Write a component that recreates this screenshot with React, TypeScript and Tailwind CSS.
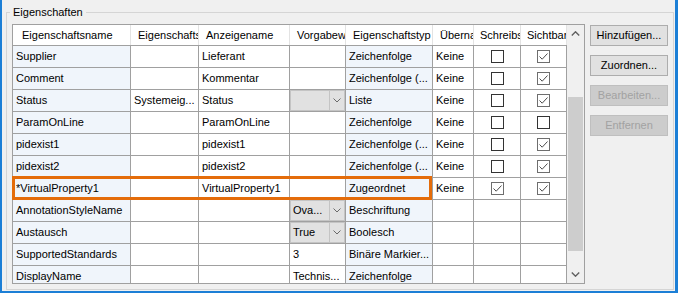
import React from 'react';

type Def = { kind: 'text' | 'combo'; value: string };

interface PropRow {
  name: string;
  source: string;
  display: string;
  def: Def;
  type: string;
  transfer: string;
  writable?: boolean;
  visible?: boolean;
}

const COLS = 'grid grid-cols-[118px_68px_91px_56px_87px_41px_47px_46px]';

// header captions are cut off by the narrow columns, as in the dialog
const HEADERS = [
  'Eigenschaftsname',
  'Eigenschafts',
  'Anzeigename',
  'Vorgabew',
  'Eigenschaftstyp',
  'Überna',
  'Schreibs',
  'Sichtbar',
];

const ROWS: PropRow[] = [
  { name: 'Supplier', source: '', display: 'Lieferant', def: { kind: 'text', value: '' }, type: 'Zeichenfolge', transfer: 'Keine', writable: false, visible: true },
  { name: 'Comment', source: '', display: 'Kommentar', def: { kind: 'text', value: '' }, type: 'Zeichenfolge (...', transfer: 'Keine', writable: false, visible: true },
  { name: 'Status', source: 'Systemeig...', display: 'Status', def: { kind: 'combo', value: '' }, type: 'Liste', transfer: 'Keine', writable: false, visible: true },
  { name: 'ParamOnLine', source: '', display: 'ParamOnLine', def: { kind: 'text', value: '' }, type: 'Zeichenfolge', transfer: 'Keine', writable: false, visible: false },
  { name: 'pidexist1', source: '', display: 'pidexist1', def: { kind: 'text', value: '' }, type: 'Zeichenfolge (...', transfer: 'Keine', writable: false, visible: true },
  { name: 'pidexist2', source: '', display: 'pidexist2', def: { kind: 'text', value: '' }, type: 'Zeichenfolge (...', transfer: 'Keine', writable: false, visible: true },
  { name: '*VirtualProperty1', source: '', display: 'VirtualProperty1', def: { kind: 'text', value: '' }, type: 'Zugeordnet', transfer: 'Keine', writable: true, visible: true },
  { name: 'AnnotationStyleName', source: '', display: '', def: { kind: 'combo', value: 'Ova...' }, type: 'Beschriftung', transfer: '' },
  { name: 'Austausch', source: '', display: '', def: { kind: 'combo', value: 'True' }, type: 'Boolesch', transfer: '' },
  { name: 'SupportedStandards', source: '', display: '', def: { kind: 'text', value: '3' }, type: 'Binäre Markier...', transfer: '' },
  { name: 'DisplayName', source: '', display: '', def: { kind: 'text', value: 'Technis...' }, type: 'Zeichenfolge', transfer: '' },
];

const Chevron = ({ up = false }: { up?: boolean }) => (
  <svg width="9" height="5" viewBox="0 0 9 5">
    <path
      d={up ? 'M0.8 4.5 L4.5 0.8 L8.2 4.5' : 'M0.8 0.5 L4.5 4.2 L8.2 0.5'}
      stroke="#606060"
      strokeWidth="1.4"
      fill="none"
    />
  </svg>
);

const SmallChevron = () => (
  <svg width="8" height="5" viewBox="0 0 8 5">
    <path d="M0.5 0.5 L4 4 L7.5 0.5" stroke="#6a6a6a" strokeWidth="1" fill="none" />
  </svg>
);

const CheckBox = ({ checked }: { checked: boolean }) => (
  <div
    className={`w-[13px] h-[13px] border bg-white flex items-center justify-center ${checked ? 'border-[#6e6e6e]' : 'border-[#333333]'}`}
  >
    {checked && (
      <svg width="11" height="11" viewBox="0 0 11 11">
        <path d="M1.5 5.5 L4.2 8.2 L9.5 2.5" stroke="#4d4d4d" strokeWidth="1" fill="none" />
      </svg>
    )}
  </div>
);

const Combo = ({ value }: { value: string }) => (
  <div className="h-full w-full flex bg-[#e1e1e1] border border-[#c4c4c4]">
    <span className="flex-1 pl-[2px] flex items-center whitespace-nowrap overflow-hidden">{value}</span>
    <div className="w-[15px] border-l border-[#c4c4c4] flex items-center justify-center">
      <SmallChevron />
    </div>
  </div>
);

const Cell = ({ children, tint = false }: { children?: React.ReactNode; tint?: boolean }) => (
  <div
    className={`border-r border-[#a0a0a0] pl-[3px] flex items-center whitespace-nowrap overflow-hidden ${tint ? 'bg-[#f0f5fb]' : 'bg-white'}`}
  >
    {children}
  </div>
);

const Scrollbar = () => (
  <div className="w-[17px] h-[258px] bg-[#f0f0f0] flex flex-col flex-shrink-0">
    <div className="h-[17px] flex items-center justify-center">
      <Chevron up />
    </div>
    <div className="h-[55px]" />
    <div className="h-[154px] mx-[1px] bg-[#cdcdcd]" />
    <div className="flex-1" />
    <div className="h-[17px] flex items-center justify-center">
      <Chevron />
    </div>
  </div>
);

const Button = ({ label, disabled = false }: { label: string; disabled?: boolean }) => (
  <button
    disabled={disabled}
    className={`w-[78px] h-[21px] border flex items-center justify-center ${disabled ? 'bg-[#cccccc] border-[#bfbfbf] text-[#a2a2a2]' : 'bg-[#e1e1e1] border-[#adadad] text-black'}`}
  >
    {label}
  </button>
);

export default function App() {
  return (
    <div className="w-[678px] h-[293px] bg-[#f0f0f0] border-l-2 border-b-2 border-r-[3px] border-[#1c7fd6] font-['Liberation_Sans',Arial,sans-serif] text-[11px] text-black overflow-hidden">
      <fieldset className="mt-[6px] ml-[4px] mr-[1px] h-[284px] border border-[#d5d5d5] px-[5px]">
        <legend className="-ml-[2px] px-[3px] leading-[13px]">Eigenschaften</legend>
        <div className="flex gap-[5px] pt-[5px]">
          {/* property grid */}
          <div className="relative w-[573px] h-[260px] border border-[#a0a0a0] bg-white flex">
            <div className="w-[554px] h-[258px] overflow-hidden">
              <div className={`${COLS} h-[21px] border-b border-[#a0a0a0] bg-white`}>
                {HEADERS.map((h, i) => (
                  <div
                    key={h}
                    className={`border-r border-[#e3e3e3] flex items-center whitespace-nowrap overflow-hidden ${i === 0 ? 'pl-[9px]' : i >= 6 ? 'pl-[6px]' : 'pl-[7px]'}`}
                  >
                    {h}
                  </div>
                ))}
              </div>
              {ROWS.map(r => (
                <div key={r.name} className={`${COLS} h-[22px] border-b border-[#a0a0a0]`}>
                  <Cell tint>{r.name}</Cell>
                  <Cell>{r.source}</Cell>
                  <Cell>{r.display}</Cell>
                  {r.def.kind === 'combo' ? (
                    <div className="border-r border-[#a0a0a0] bg-white">
                      <Combo value={r.def.value} />
                    </div>
                  ) : (
                    <Cell>{r.def.value}</Cell>
                  )}
                  <Cell tint>{r.type}</Cell>
                  <Cell>{r.transfer}</Cell>
                  <div className="border-r border-[#a0a0a0] bg-white flex items-center justify-center">
                    {r.writable !== undefined && <CheckBox checked={r.writable} />}
                  </div>
                  <div className="border-r border-[#a0a0a0] bg-white flex items-center justify-center">
                    {r.visible !== undefined && <CheckBox checked={r.visible} />}
                  </div>
                </div>
              ))}
            </div>
            <Scrollbar />
            {/* highlight around the virtual property row */}
            <div className="absolute left-[-1px] top-[151px] w-[420px] h-[24px] border-[3px] border-[#e46c0a] pointer-events-none" />
          </div>

          <div className="flex flex-col gap-[9px] pt-[1px]">
            <Button label="Hinzufügen..." />
            <Button label="Zuordnen..." />
            <Button label="Bearbeiten..." disabled />
            <Button label="Entfernen" disabled />
          </div>
        </div>
      </fieldset>
    </div>
  );
}
